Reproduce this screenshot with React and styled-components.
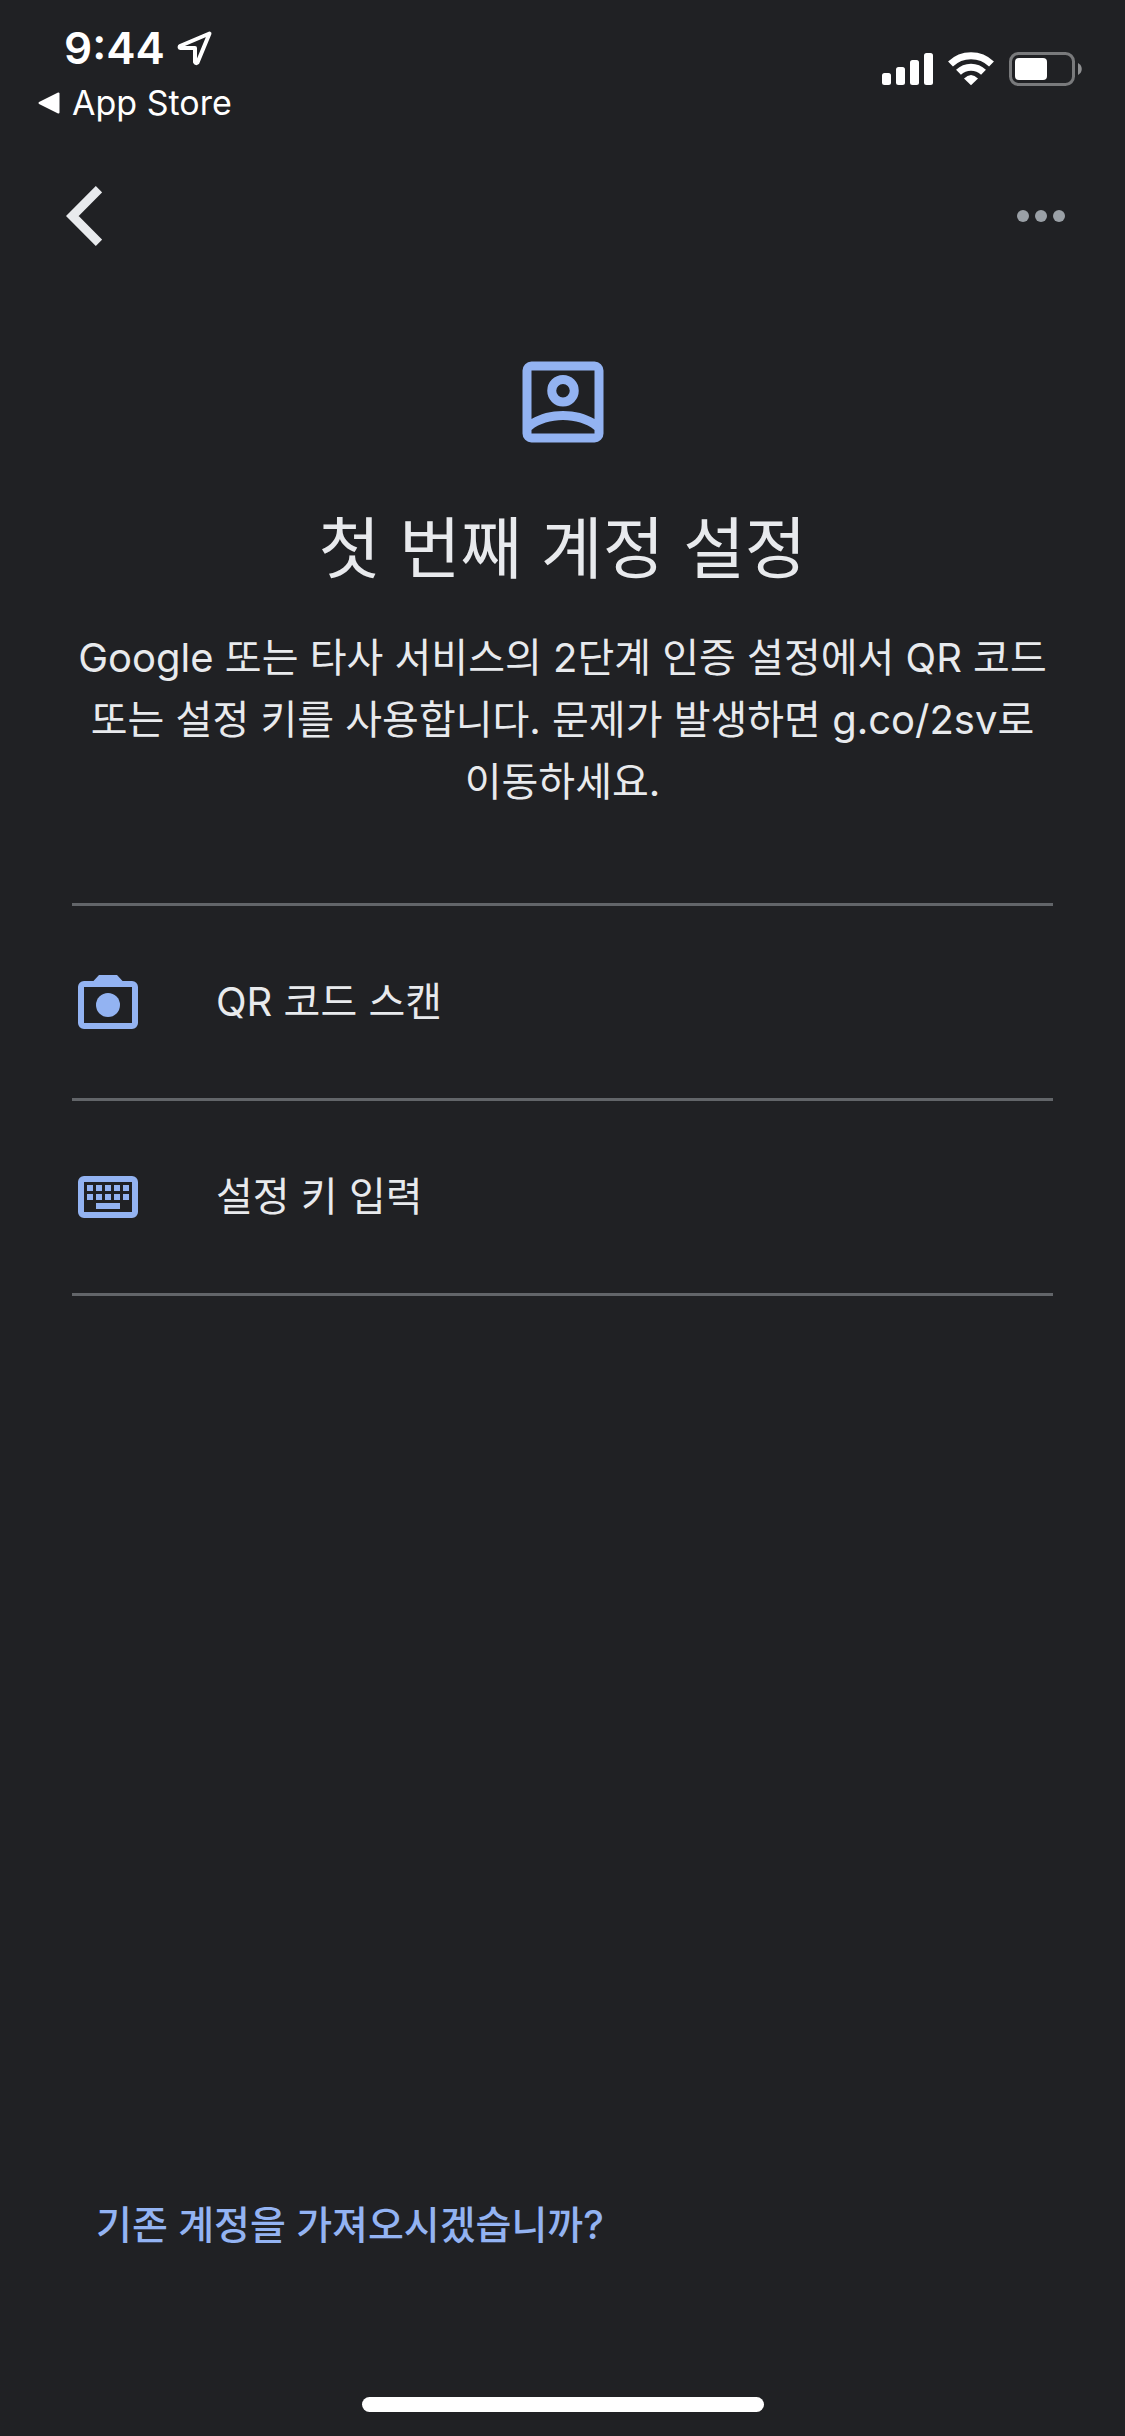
import styled, { createGlobalStyle } from 'styled-components';

const options = [
  { id: 'scan', label: 'QR 코드 스캔', Icon: CameraIcon },
  { id: 'key', label: '설정 키 입력', Icon: KeyboardIcon },
];

const App = () => {
  return (
    <>
      <GlobalStyle />
      <Screen>
        <StatusBar>
          <StatusLeft>
            <Clock>
              9:44 <LocationIcon />
            </Clock>
            <ReturnLink href="#app-store">
              <TriangleIcon />
              App Store
            </ReturnLink>
          </StatusLeft>
          <StatusRight>
            <SignalIcon />
            <WifiIcon />
            <BatteryIcon />
          </StatusRight>
        </StatusBar>

        <NavBar>
          <IconButton type="button" aria-label="뒤로">
            <BackIcon />
          </IconButton>
          <IconButton type="button" aria-label="더보기">
            <MoreIcon />
          </IconButton>
        </NavBar>

        <Main>
          <Intro>
            <AccountIcon />
            <Title>첫 번째 계정 설정</Title>
            <Description>
              Google 또는 타사 서비스의 2단계 인증 설정에서 QR 코드 또는 설정 키를
              사용합니다. 문제가 발생하면 g.co/2sv로 이동하세요.
            </Description>
          </Intro>

          <OptionList>
            {options.map(({ id, label, Icon }) => (
              <OptionItem key={id}>
                <OptionButton type="button">
                  <Icon />
                  {label}
                </OptionButton>
              </OptionItem>
            ))}
          </OptionList>
        </Main>

        <Footer>
          <ImportLink href="#import">기존 계정을 가져오시겠습니까?</ImportLink>
          <HomeIndicator />
        </Footer>
      </Screen>
    </>
  );
};

function LocationIcon() {
  return (
    <svg width="36" height="36" viewBox="0 0 36 36" fill="none" stroke="#fff" strokeWidth="4" strokeLinejoin="round" aria-hidden="true">
      <path d="M32.5 3.5L3 16Q2 18 3.5 18H18V32Q18.8 34 20.5 32.5Z" />
    </svg>
  );
}

function TriangleIcon() {
  return (
    <svg width="22" height="22" viewBox="0 0 22 22" fill="#fff" stroke="#fff" strokeWidth="2" strokeLinejoin="round" aria-hidden="true">
      <path d="M1.5 11L20.5 1.5V20.5Z" />
    </svg>
  );
}

function SignalIcon() {
  return (
    <svg width="51" height="34" viewBox="0 0 51 34" fill="#fff" aria-hidden="true">
      <rect x="0" y="21" width="9" height="12" rx="2.5" />
      <rect x="14" y="15" width="9" height="18" rx="2.5" />
      <rect x="28" y="8" width="9" height="25" rx="2.5" />
      <rect x="42" y="1" width="9" height="32" rx="2.5" />
    </svg>
  );
}

function WifiIcon() {
  return (
    <svg width="46" height="34" viewBox="0 0 46 34" aria-hidden="true">
      <g fill="none" stroke="#fff" strokeWidth="7">
        <path d="M2.5 12A29.5 29.5 0 0 1 43.5 12" />
        <path d="M10.5 20.3A18 18 0 0 1 35.5 20.3" />
      </g>
      <path d="M16 26.5Q23 19.5 30 26.5L23 33.2Z" fill="#fff" />
    </svg>
  );
}

function BatteryIcon() {
  return (
    <svg width="73" height="34" viewBox="0 0 73 34" aria-hidden="true">
      <rect x="1.5" y="1.5" width="63" height="31" rx="8" fill="none" stroke="#797a7c" strokeWidth="3" />
      <rect x="6" y="6" width="32" height="22" rx="4" fill="#fff" />
      <path d="M69 11C74 13.5 74 20.5 69 23Z" fill="#8f9092" />
    </svg>
  );
}

function BackIcon() {
  return (
    <svg width="36" height="60" viewBox="0 0 36 60" fill="none" stroke="#e8eaed" strokeWidth="9" aria-hidden="true">
      <path d="M33 3.2L6.3 30L33 56.8" />
    </svg>
  );
}

function MoreIcon() {
  return (
    <svg width="48" height="12" viewBox="0 0 48 12" fill="#9aa0a6" aria-hidden="true">
      <circle cx="6" cy="6" r="6" />
      <circle cx="24" cy="6" r="6" />
      <circle cx="42" cy="6" r="6" />
    </svg>
  );
}

function AccountIcon() {
  return (
    <svg width="108" height="108" viewBox="0 0 24 24" fill="#93b3f2" fillRule="evenodd" aria-hidden="true">
      <path d="M5 3H19A2 2 0 0 1 21 5V19A2 2 0 0 1 19 21H5A2 2 0 0 1 3 19V5A2 2 0 0 1 5 3ZM5 5V15.79C6.9 14.65 9.3 14 12 14S17.1 14.65 19 15.79V5ZM5 19H19V18.2C17.2 16.75 14.7 16 12 16S6.8 16.75 5 18.2Z" />
      <path d="M12 6A3.5 3.5 0 1 0 12 13A3.5 3.5 0 1 0 12 6ZM12 8A1.5 1.5 0 1 1 12 11A1.5 1.5 0 1 1 12 8Z" />
    </svg>
  );
}

function CameraIcon() {
  return (
    <svg width="72" height="72" viewBox="0 0 24 24" fill="#93b3f2" fillRule="evenodd" aria-hidden="true">
      <path d="M4 5H7.15L9 3H15L16.85 5H20A2 2 0 0 1 22 7V19A2 2 0 0 1 20 21H4A2 2 0 0 1 2 19V7A2 2 0 0 1 4 5ZM4 7V19H20V7Z" />
      <circle cx="12" cy="13" r="4" />
    </svg>
  );
}

function KeyboardIcon() {
  return (
    <svg width="72" height="72" viewBox="0 0 24 24" fill="#93b3f2" fillRule="evenodd" aria-hidden="true">
      <path d="M4 5H20A2 2 0 0 1 22 7V17A2 2 0 0 1 20 19H4A2 2 0 0 1 2 17V7A2 2 0 0 1 4 5ZM4 7V17H20V7Z" />
      <path d="M5 8h2v2H5zM8 8h2v2H8zM11 8h2v2h-2zM14 8h2v2h-2zM17 8h2v2h-2zM5 11h2v2H5zM8 11h2v2H8zM11 11h2v2h-2zM14 11h2v2h-2zM17 11h2v2h-2zM8 14h8v2H8z" />
    </svg>
  );
}

const GlobalStyle = createGlobalStyle`
  * {
    box-sizing: border-box;
  }

  body {
    margin: 0;
    background: #202124;
    color: #e8eaed;
    font-family: Inter, 'Noto Sans CJK KR', sans-serif;
  }

  svg {
    display: block;
    flex: none;
  }

  a {
    color: inherit;
    text-decoration: none;
  }

  button {
    padding: 0;
    border: none;
    background: none;
    color: inherit;
    font: inherit;
    cursor: pointer;
  }
`;

const Screen = styled.div`
  display: flex;
  flex-direction: column;
  min-height: 100vh;
`;

const StatusBar = styled.header`
  display: flex;
  justify-content: space-between;
  align-items: flex-start;
  padding: 20px 43px 0 38px;
  color: #fff;
`;

const StatusLeft = styled.div`
  display: flex;
  flex-direction: column;
`;

const Clock = styled.div`
  display: flex;
  align-items: center;
  gap: 12px;
  padding-left: 26px;
  font-size: 44px;
  font-weight: 600;
  line-height: 56px;
`;

const ReturnLink = styled.a`
  display: flex;
  align-items: center;
  gap: 12px;
  font-size: 34px;
  line-height: 54px;
`;

const StatusRight = styled.div`
  display: flex;
  gap: 15px;
  padding-top: 32px;
`;

const NavBar = styled.nav`
  display: flex;
  justify-content: space-between;
  align-items: center;
  padding: 38px 42px 0;
`;

const IconButton = styled.button`
  display: flex;
  justify-content: center;
  align-items: center;
  min-width: 84px;
  height: 96px;
`;

const Main = styled.main`
  flex: 1;
  padding: 84px 72px 0;
`;

const Intro = styled.section`
  display: flex;
  flex-direction: column;
  align-items: center;
  text-align: center;
`;

const Title = styled.h1`
  margin: 51px 0 36px;
  font-size: 67px;
  font-weight: 400;
  line-height: 84px;
`;

const Description = styled.p`
  margin: 0 0 90px;
  font-size: 40px;
  line-height: 62px;
  word-break: keep-all;
`;

const OptionList = styled.ul`
  margin: 0;
  padding: 0;
  border-top: 3px solid #626569;
  list-style: none;
`;

const OptionItem = styled.li`
  border-bottom: 3px solid #626569;
`;

const OptionButton = styled.button`
  display: flex;
  align-items: center;
  gap: 72px;
  width: 100%;
  height: 192px;
  font-size: 40px;
  line-height: 62px;
  text-align: left;
`;

const Footer = styled.footer`
  display: flex;
  flex-direction: column;
  padding: 0 96px 24px;
`;

const ImportLink = styled.a`
  align-self: flex-start;
  margin-bottom: 142px;
  color: #93b3f2;
  font-size: 39px;
  font-weight: 500;
  line-height: 60px;
`;

const HomeIndicator = styled.div`
  align-self: center;
  width: 402px;
  height: 15px;
  border-radius: 8px;
  background: #fff;
`;

export default App;
